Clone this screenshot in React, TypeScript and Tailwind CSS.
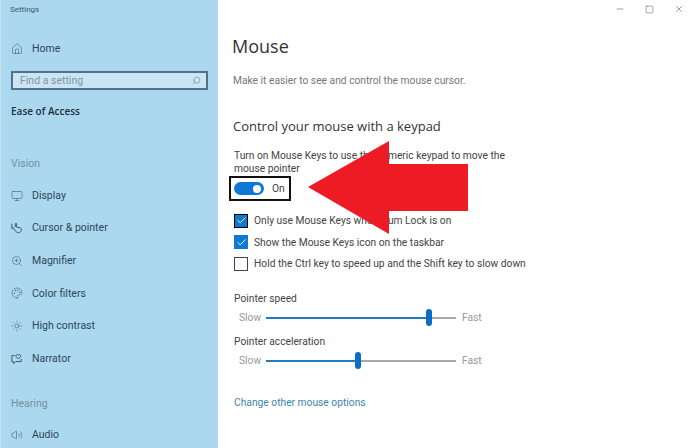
import { Home, Search, Monitor, ZoomIn, Palette, Sun, Volume2, Minus, Square, X, Check } from 'lucide-react'
import type { SVGProps } from 'react'

type IconProps = SVGProps<SVGSVGElement> & { strokeWidth?: number }

function CursorPointer(props: IconProps) {
  return (
    <svg viewBox="0 0 14 14" fill="none" stroke="currentColor" {...props}>
      <path d="M1 2v6l1.5-1.5L4 9" />
      <path d="M5 6V2.2a.8.8 0 0 1 1.6 0V6l4 .8c1 .3 1.6 1 1.6 2 0 2-1.2 3.7-3.5 3.7-1.7 0-2.6-.8-3.4-2L3.6 8.2" />
    </svg>
  )
}

function Narrator(props: IconProps) {
  return (
    <svg viewBox="0 0 14 14" fill="none" stroke="currentColor" {...props}>
      <path d="M4 3H1v7h2v2.5L5.5 10H12V7" />
      <path d="M8.5 7 6 4.5a1.6 1.6 0 0 1 2.5-2 1.6 1.6 0 0 1 2.5 2z" />
    </svg>
  )
}

const vision = [
  { label: 'Display', icon: Monitor },
  { label: 'Cursor & pointer', icon: CursorPointer },
  { label: 'Magnifier', icon: ZoomIn },
  { label: 'Color filters', icon: Palette },
  { label: 'High contrast', icon: Sun },
  { label: 'Narrator', icon: Narrator },
]

function NavItem({ label, icon: Icon }: { label: string; icon: React.ComponentType<IconProps> }) {
  return (
    <div className="flex h-[32.6px] items-center text-[10.5px] text-[#2c4658]">
      <Icon className="ml-[10px] mr-[9px] h-[12px] w-[12px] text-[#3c5566]" strokeWidth={1.1} />
      <span>{label}</span>
    </div>
  )
}

function Option({ label, checked, dark }: { label: string; checked: boolean; dark?: boolean }) {
  return (
    <div className="flex h-[21.5px] items-center gap-[6px] text-[10.25px] text-[#444]">
      {checked ? (
        <span className={`flex h-[14px] w-[14px] items-center justify-center bg-[#0f78d2] ${dark ? 'border border-black' : ''}`}>
          <Check className="h-[11px] w-[11px] text-white" strokeWidth={2} />
        </span>
      ) : (
        <span className="h-[14px] w-[14px] border-[1.5px] border-[#444]" />
      )}
      <span>{label}</span>
    </div>
  )
}

function Slider({ percent }: { percent: number }) {
  return (
    <div className="flex h-[20px] items-center pl-[6px] text-[10.25px] text-[#999]">
      <span className="w-[27px]">Slow</span>
      <div className="relative h-[2px] w-[190px] bg-[#a8a8a8]">
        <div className="h-full bg-[#1f7cc4]" style={{ width: `${percent}%` }} />
        <div className="absolute top-[-8px] h-[17px] w-[6px] rounded-[3px] bg-[#0c6dc4]" style={{ left: `${percent}%`, marginLeft: -3 }} />
      </div>
      <span className="ml-[6px]">Fast</span>
    </div>
  )
}

export default function App() {
  return (
    <div className="relative flex h-[448px] w-[693px] overflow-hidden bg-white font-['Roboto',sans-serif]">
      {/* Sidebar */}
      <aside className="flex w-[218px] shrink-0 flex-col border-l-[1px] border-[#c4e2f2] bg-[#abd8ee]">
        <div className="pl-[9px] pt-[2px] text-[8px] leading-[15px] text-[#3f5a6b]">Settings</div>
        <div className="mt-[16px]">
          <NavItem label="Home" icon={Home} />
        </div>
        <div className="mx-[10px] mt-[5px] flex h-[21px] items-center justify-between border-2 border-[#4f7388] bg-[#cbe5f3] pl-[7px] pr-[5px] text-[10.5px] text-[#7c95a3]">
          <span>Find a setting</span>
          <Search className="h-[9px] w-[9px] -scale-x-100 text-[#7c95a3]" />
        </div>
        <div className="mt-[14px] pl-[10px] font-['Open_Sans',sans-serif] text-[10px] font-semibold leading-[14px] text-[#1c3140]">Ease of Access</div>
        <div className="mt-[39px] pl-[10px] text-[10.5px] leading-[14px] text-[#71909f]">Vision</div>
        <div className="mt-[8px]">
          {vision.map(item => (
            <NavItem key={item.label} {...item} />
          ))}
        </div>
        <div className="mt-[22px] pl-[10px] text-[10.5px] leading-[14px] text-[#71909f]">Hearing</div>
        <div className="mt-[8px]">
          <NavItem label="Audio" icon={Volume2} />
        </div>
      </aside>

      {/* Main */}
      <main className="relative flex-1 pl-[15px]">
        <div className="absolute right-[9px] top-[4px] flex items-center gap-[20px] text-[#666]">
          <Minus className="h-[10px] w-[10px]" strokeWidth={1.5} />
          <Square className="h-[9px] w-[9px]" strokeWidth={1.5} />
          <X className="h-[10px] w-[10px]" strokeWidth={1.5} />
        </div>
        <h1 className="ml-[-1px] mt-[34px] font-['Open_Sans',sans-serif] text-[18px] leading-[24px] text-[#333]">Mouse</h1>
        <p className="mt-[16px] text-[10.25px] leading-[14px] text-[#777]">Make it easier to see and control the mouse cursor.</p>
        <h2 className="mt-[29px] font-['Open_Sans',sans-serif] text-[13px] leading-[18px] text-[#333]">Control your mouse with a keypad</h2>
        <p className="mt-[14px] w-[280px] pl-px text-[10.25px] leading-[13px] text-[#444]">
          Turn on Mouse Keys to use the numeric keypad to move the mouse pointer
        </p>
        <div className="ml-[-4px] mt-[1px] flex h-[25px] w-[62px] items-center gap-[8px] border-2 border-[#111] pl-[3px] text-[10.25px] text-[#444]">
          <span className="flex h-[13px] w-[30px] items-center justify-end rounded-full bg-[#0f78d2] pr-[3px]">
            <span className="h-[8px] w-[8px] rounded-full bg-white" />
          </span>
          <span>On</span>
        </div>
        <div className="mt-[9px] pl-px">
          <Option label="Only use Mouse Keys when Num Lock is on" checked dark />
          <Option label="Show the Mouse Keys icon on the taskbar" checked />
          <Option label="Hold the Ctrl key to speed up and the Shift key to slow down" checked={false} />
        </div>
        <div className="mt-[17px] pl-px text-[10.25px] leading-[14px] text-[#444]">Pointer speed</div>
        <div className="mt-[2px]">
          <Slider percent={86} />
        </div>
        <div className="mt-[7px] pl-px text-[10.25px] leading-[14px] text-[#444]">Pointer acceleration</div>
        <div className="mt-[2px]">
          <Slider percent={48.5} />
        </div>
        <div className="mt-[25px] pl-px text-[10.25px] leading-[14px] text-[#3f84ad]">Change other mouse options</div>
      </main>

      {/* Red arrow over the page */}
      <svg className="absolute left-0 top-0" width="693" height="448" viewBox="0 0 693 448">
        <polygon points="308,187 389,141 389,164 468,164 468,211 389,211 389,234" fill="#ed1c24" />
      </svg>
    </div>
  )
}
